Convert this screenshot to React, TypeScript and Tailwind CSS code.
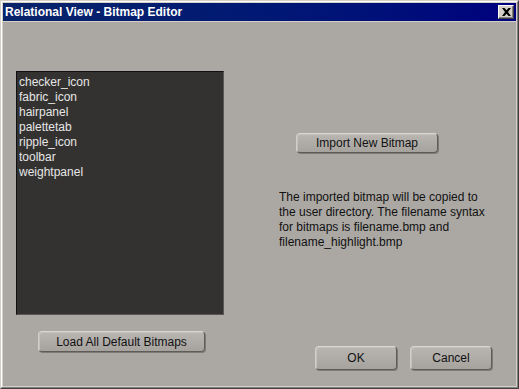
import React from 'react';

const items = ['checker_icon', 'fabric_icon', 'hairpanel', 'palettetab', 'ripple_icon', 'toolbar', 'weightpanel'];

function Btn({ label, className }: { label: string; className: string }) {
  return (
    <button
      className={`flex items-center justify-center rounded-[4px] border border-t-[#d9d6d2] border-l-[#d2cfcb] border-b-[#5e5b58] border-r-[#5e5b58] bg-gradient-to-b from-[#b9b6b2] to-[#a6a39f] text-[12px] text-[#111] shadow-[1px_1px_0_#7d7a77,inset_1px_1px_0_#c4c1bd] ${className}`}
    >
      {label}
    </button>
  );
}

export default function App() {
  return (
    <div className="w-[519px] h-[389px] font-['Liberation_Sans',Arial,sans-serif] border border-t-[#d4d0c8] border-l-[#d4d0c8] border-b-[#404040] border-r-[#404040]">
      <div className="h-full flex flex-col border border-t-white border-l-white border-b-[#808080] border-r-[#808080] bg-[#d4d0c8] p-px">
        <div className="h-[18px] flex items-center justify-between bg-gradient-to-r from-[#0a246a] to-[#00007e] pl-[2px] pr-[2px]">
          <span className="text-white font-bold text-[12px] leading-none">Relational View - Bitmap Editor</span>
          <div className="w-[16px] h-[14px] flex items-center justify-center bg-[#d4d0c8] border border-t-white border-l-white border-b-[#404040] border-r-[#404040] shadow-[inset_-1px_-1px_0_#808080]">
            <svg width="9" height="8" viewBox="0 0 9 8">
              <path d="M0 0h2.5l2 2.3 2-2.3H9L6 4l3 4H6.5l-2-2.3-2 2.3H0l3-4z" fill="#000" />
            </svg>
          </div>
        </div>
        <div className="h-px bg-[#d4d0c8]" />
        <div className="flex-1 flex bg-[#aba8a4]">
          <div className="pl-[13px] pt-[49px] flex flex-col">
            <div className="w-[208px] h-[244px] bg-[#333230] border-t border-l border-t-[#111] border-l-[#111] border-b border-r border-b-[#5a5856] border-r-[#5a5856] pl-[2px] pt-[3px]">
              {items.map((it) => (
                <div key={it} className="text-[12px] leading-[15px] text-[#e6e6e6]">
                  {it}
                </div>
              ))}
            </div>
            <Btn label="Load All Default Bitmaps" className="mt-[16px] ml-[22px] w-[167px] h-[21px]" />
          </div>
          <div className="pl-[55px] flex flex-col flex-1">
            <Btn label="Import New Bitmap" className="mt-[111px] ml-[17px] w-[142px] h-[20px]" />
            <p className="mt-[37px] text-[12px] leading-[15px] text-[#111] w-[213px]">
              The imported bitmap will be copied to the user directory. The filename syntax for bitmaps is filename.bmp and filename_highlight.bmp
            </p>
            <div className="mt-auto mb-[16px] ml-[36px] flex gap-[13px]">
              <Btn label="OK" className="w-[82px] h-[24px]" />
              <Btn label="Cancel" className="w-[82px] h-[24px]" />
            </div>
          </div>
        </div>
      </div>
    </div>
  );
}
